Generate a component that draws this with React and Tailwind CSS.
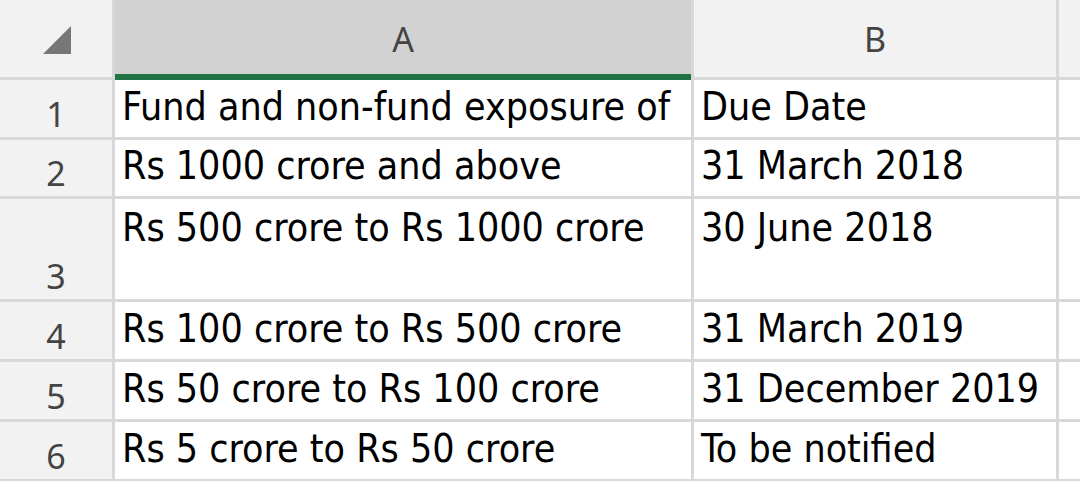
const rows = [
  { n: 1, a: "Fund and non-fund exposure of", b: "Due Date" },
  { n: 2, a: "Rs 1000 crore and above", b: "31 March 2018" },
  { n: 3, a: "Rs 500 crore to Rs 1000 crore", b: "30 June 2018", tall: true },
  { n: 4, a: "Rs 100 crore to Rs 500 crore", b: "31 March 2019" },
  { n: 5, a: "Rs 50 crore to Rs 100 crore", b: "31 December 2019" },
  { n: 6, a: "Rs 5 crore to Rs 50 crore", b: "To be notified" },
];

const headFont = "font-['Noto_Sans',sans-serif] text-[34px] leading-none text-[#444]";
const cellFont = "font-['DejaVu_Sans_Condensed','DejaVu_Sans',sans-serif] text-[39px] leading-none text-black whitespace-nowrap overflow-hidden";

function Cell({ children, tall }) {
  return (
    <div className={`bg-white flex px-[7px] ${tall ? "items-start pt-[9px]" : "items-end pb-[11px]"} ${cellFont}`}>
      {children}
    </div>
  );
}

export default function App() {
  return (
    <div className="w-[1080px] h-[481px] overflow-hidden bg-[#d8d8d8]">
      <div className="grid grid-cols-[112px_576px_362px_1fr] grid-rows-[77px_57px_56px_100px_57px_57px_57px] gap-[3px]">
        <div className="bg-[#f2f2f2] flex items-center justify-center">
          <svg width="30" height="28" viewBox="0 0 30 28" className="ml-[2px] mt-[2px]">
            <polygon points="29,0 29,28 1,28" fill="#777" />
          </svg>
        </div>
        <div className={`relative bg-[#d2d2d2] flex items-center justify-center ${headFont}`}>
          A
          <div className="absolute left-0 right-0 bottom-[-3px] h-[6px] bg-[#217346]" />
        </div>
        <div className={`bg-[#f2f2f2] flex items-center justify-center ${headFont}`}>B</div>
        <div className="bg-[#f2f2f2]" />

        {rows.map((r) => (
          <div key={r.n} className="contents">
            <div className={`bg-[#f2f2f2] flex items-end justify-center pb-[6px] ${headFont}`}>{r.n}</div>
            <Cell tall={r.tall}>{r.a}</Cell>
            <Cell tall={r.tall}>{r.b}</Cell>
            <div className="bg-white" />
          </div>
        ))}
      </div>
    </div>
  );
}
